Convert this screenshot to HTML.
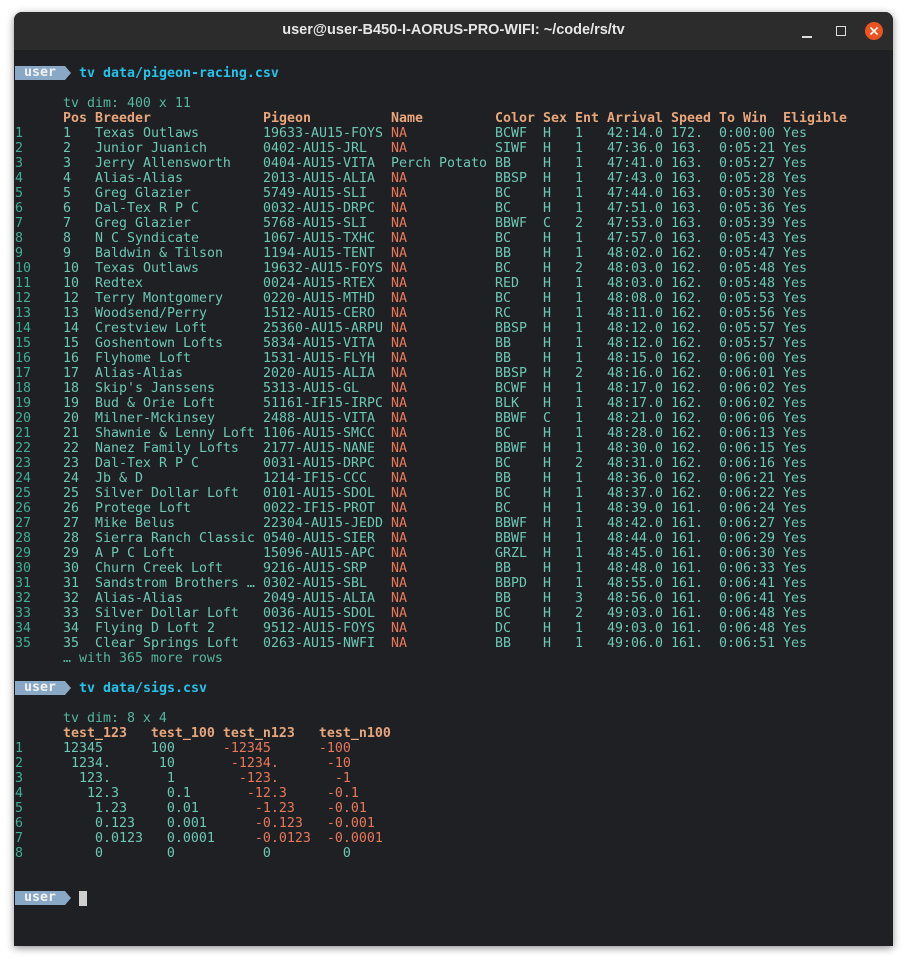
<!DOCTYPE html>
<html><head><meta charset="utf-8"><style>
html,body{margin:0;padding:0;background:#fff;width:911px;height:964px;overflow:hidden}
.win{position:absolute;left:14px;top:12px;width:879px;height:934px;background:#1f2023;border-radius:8px 8px 0 0;box-shadow:0 2px 8px rgba(0,0,0,.45);overflow:hidden}
.tb{position:absolute;left:0;top:0;width:879px;height:38px;background:#2c2c2c}
.title{position:absolute;left:0;right:0;top:10px;text-align:center;color:#e6e6e6;font:bold 14.5px "Liberation Sans",sans-serif}
.close{position:absolute;left:851px;top:10px;width:18px;height:18px;border-radius:50%;background:#e95420}
.max{position:absolute;left:822px;top:14px;width:8px;height:8px;border:1.2px solid #ddd}
.min{position:absolute;left:788px;top:24px;width:10px;height:1.5px;background:#ddd}
.term{position:absolute;left:1px;top:54px;font-family:"DejaVu Sans Mono","Liberation Mono",monospace;font-size:13.29px;line-height:15px;color:#6cc7b5;white-space:normal}
.l{height:15px;position:relative;white-space:pre}
.r{display:grid;grid-template-columns:48px 32px 168px 128px 104px 48px 32px 32px 64px 48px 64px auto;height:15px}
.r span{white-space:pre}
.n{color:#3fae98}
.h{color:#e8a67c;font-weight:bold}
.na{color:#e8775a}
.neg{color:#e8775a}
.d{color:#55b59f}
.badge{display:inline-block;position:absolute;left:0;top:0;width:50px;height:14px;background:#88a8c6;color:#f2f2f2;font-weight:bold}
.badge b{position:absolute;left:9px;top:-1px}
.badge:after{content:"";position:absolute;left:50px;top:0;border-left:6px solid #88a8c6;border-top:7px solid transparent;border-bottom:7px solid transparent}
.cmd{color:#26c2ea;font-weight:bold;position:absolute;left:64px;top:0}
.cur{position:absolute;left:64px;top:0;width:8px;height:15px;background:#cfcfcf}
</style></head><body>
<div class="win">
<div class="tb"><div class="title">user@user-B450-I-AORUS-PRO-WIFI: ~/code/rs/tv</div>
<div class="min"></div><div class="max"></div><div class="close"><svg width="18" height="18"><path d="M5.5 5.5L12.5 12.5M12.5 5.5L5.5 12.5" stroke="#fff" stroke-width="1.6"/></svg></div></div>
<div class="term">
<div class="l"><span class="badge"><b>user</b></span><span class="cmd">tv data/pigeon-racing.csv</span></div>
<div class="l"></div>
<div class="l d">      tv dim: 400 x 11</div>
<div class="r h"><span></span><span>Pos</span><span>Breeder</span><span>Pigeon</span><span>Name</span><span>Color</span><span>Sex</span><span>Ent</span><span>Arrival</span><span>Speed</span><span>To Win</span><span>Eligible</span></div>
<div class="r"><span class="n">1</span><span>1</span><span>Texas Outlaws</span><span>19633-AU15-FOYS</span><span class="na">NA</span><span>BCWF</span><span>H</span><span>1</span><span>42:14.0</span><span>172.</span><span>0:00:00</span><span>Yes</span></div>
<div class="r"><span class="n">2</span><span>2</span><span>Junior Juanich</span><span>0402-AU15-JRL</span><span class="na">NA</span><span>SIWF</span><span>H</span><span>1</span><span>47:36.0</span><span>163.</span><span>0:05:21</span><span>Yes</span></div>
<div class="r"><span class="n">3</span><span>3</span><span>Jerry Allensworth</span><span>0404-AU15-VITA</span><span>Perch Potato</span><span>BB</span><span>H</span><span>1</span><span>47:41.0</span><span>163.</span><span>0:05:27</span><span>Yes</span></div>
<div class="r"><span class="n">4</span><span>4</span><span>Alias-Alias</span><span>2013-AU15-ALIA</span><span class="na">NA</span><span>BBSP</span><span>H</span><span>1</span><span>47:43.0</span><span>163.</span><span>0:05:28</span><span>Yes</span></div>
<div class="r"><span class="n">5</span><span>5</span><span>Greg Glazier</span><span>5749-AU15-SLI</span><span class="na">NA</span><span>BC</span><span>H</span><span>1</span><span>47:44.0</span><span>163.</span><span>0:05:30</span><span>Yes</span></div>
<div class="r"><span class="n">6</span><span>6</span><span>Dal-Tex R P C</span><span>0032-AU15-DRPC</span><span class="na">NA</span><span>BC</span><span>H</span><span>1</span><span>47:51.0</span><span>163.</span><span>0:05:36</span><span>Yes</span></div>
<div class="r"><span class="n">7</span><span>7</span><span>Greg Glazier</span><span>5768-AU15-SLI</span><span class="na">NA</span><span>BBWF</span><span>C</span><span>2</span><span>47:53.0</span><span>163.</span><span>0:05:39</span><span>Yes</span></div>
<div class="r"><span class="n">8</span><span>8</span><span>N C Syndicate</span><span>1067-AU15-TXHC</span><span class="na">NA</span><span>BC</span><span>H</span><span>1</span><span>47:57.0</span><span>163.</span><span>0:05:43</span><span>Yes</span></div>
<div class="r"><span class="n">9</span><span>9</span><span>Baldwin &amp; Tilson</span><span>1194-AU15-TENT</span><span class="na">NA</span><span>BB</span><span>H</span><span>1</span><span>48:02.0</span><span>162.</span><span>0:05:47</span><span>Yes</span></div>
<div class="r"><span class="n">10</span><span>10</span><span>Texas Outlaws</span><span>19632-AU15-FOYS</span><span class="na">NA</span><span>BC</span><span>H</span><span>2</span><span>48:03.0</span><span>162.</span><span>0:05:48</span><span>Yes</span></div>
<div class="r"><span class="n">11</span><span>10</span><span>Redtex</span><span>0024-AU15-RTEX</span><span class="na">NA</span><span>RED</span><span>H</span><span>1</span><span>48:03.0</span><span>162.</span><span>0:05:48</span><span>Yes</span></div>
<div class="r"><span class="n">12</span><span>12</span><span>Terry Montgomery</span><span>0220-AU15-MTHD</span><span class="na">NA</span><span>BC</span><span>H</span><span>1</span><span>48:08.0</span><span>162.</span><span>0:05:53</span><span>Yes</span></div>
<div class="r"><span class="n">13</span><span>13</span><span>Woodsend/Perry</span><span>1512-AU15-CERO</span><span class="na">NA</span><span>RC</span><span>H</span><span>1</span><span>48:11.0</span><span>162.</span><span>0:05:56</span><span>Yes</span></div>
<div class="r"><span class="n">14</span><span>14</span><span>Crestview Loft</span><span>25360-AU15-ARPU</span><span class="na">NA</span><span>BBSP</span><span>H</span><span>1</span><span>48:12.0</span><span>162.</span><span>0:05:57</span><span>Yes</span></div>
<div class="r"><span class="n">15</span><span>15</span><span>Goshentown Lofts</span><span>5834-AU15-VITA</span><span class="na">NA</span><span>BB</span><span>H</span><span>1</span><span>48:12.0</span><span>162.</span><span>0:05:57</span><span>Yes</span></div>
<div class="r"><span class="n">16</span><span>16</span><span>Flyhome Loft</span><span>1531-AU15-FLYH</span><span class="na">NA</span><span>BB</span><span>H</span><span>1</span><span>48:15.0</span><span>162.</span><span>0:06:00</span><span>Yes</span></div>
<div class="r"><span class="n">17</span><span>17</span><span>Alias-Alias</span><span>2020-AU15-ALIA</span><span class="na">NA</span><span>BBSP</span><span>H</span><span>2</span><span>48:16.0</span><span>162.</span><span>0:06:01</span><span>Yes</span></div>
<div class="r"><span class="n">18</span><span>18</span><span>Skip's Janssens</span><span>5313-AU15-GL</span><span class="na">NA</span><span>BCWF</span><span>H</span><span>1</span><span>48:17.0</span><span>162.</span><span>0:06:02</span><span>Yes</span></div>
<div class="r"><span class="n">19</span><span>19</span><span>Bud &amp; Orie Loft</span><span>51161-IF15-IRPC</span><span class="na">NA</span><span>BLK</span><span>H</span><span>1</span><span>48:17.0</span><span>162.</span><span>0:06:02</span><span>Yes</span></div>
<div class="r"><span class="n">20</span><span>20</span><span>Milner-Mckinsey</span><span>2488-AU15-VITA</span><span class="na">NA</span><span>BBWF</span><span>C</span><span>1</span><span>48:21.0</span><span>162.</span><span>0:06:06</span><span>Yes</span></div>
<div class="r"><span class="n">21</span><span>21</span><span>Shawnie &amp; Lenny Loft</span><span>1106-AU15-SMCC</span><span class="na">NA</span><span>BC</span><span>H</span><span>1</span><span>48:28.0</span><span>162.</span><span>0:06:13</span><span>Yes</span></div>
<div class="r"><span class="n">22</span><span>22</span><span>Nanez Family Lofts</span><span>2177-AU15-NANE</span><span class="na">NA</span><span>BBWF</span><span>H</span><span>1</span><span>48:30.0</span><span>162.</span><span>0:06:15</span><span>Yes</span></div>
<div class="r"><span class="n">23</span><span>23</span><span>Dal-Tex R P C</span><span>0031-AU15-DRPC</span><span class="na">NA</span><span>BC</span><span>H</span><span>2</span><span>48:31.0</span><span>162.</span><span>0:06:16</span><span>Yes</span></div>
<div class="r"><span class="n">24</span><span>24</span><span>Jb &amp; D</span><span>1214-IF15-CCC</span><span class="na">NA</span><span>BB</span><span>H</span><span>1</span><span>48:36.0</span><span>162.</span><span>0:06:21</span><span>Yes</span></div>
<div class="r"><span class="n">25</span><span>25</span><span>Silver Dollar Loft</span><span>0101-AU15-SDOL</span><span class="na">NA</span><span>BC</span><span>H</span><span>1</span><span>48:37.0</span><span>162.</span><span>0:06:22</span><span>Yes</span></div>
<div class="r"><span class="n">26</span><span>26</span><span>Protege Loft</span><span>0022-IF15-PROT</span><span class="na">NA</span><span>BC</span><span>H</span><span>1</span><span>48:39.0</span><span>161.</span><span>0:06:24</span><span>Yes</span></div>
<div class="r"><span class="n">27</span><span>27</span><span>Mike Belus</span><span>22304-AU15-JEDD</span><span class="na">NA</span><span>BBWF</span><span>H</span><span>1</span><span>48:42.0</span><span>161.</span><span>0:06:27</span><span>Yes</span></div>
<div class="r"><span class="n">28</span><span>28</span><span>Sierra Ranch Classic</span><span>0540-AU15-SIER</span><span class="na">NA</span><span>BBWF</span><span>H</span><span>1</span><span>48:44.0</span><span>161.</span><span>0:06:29</span><span>Yes</span></div>
<div class="r"><span class="n">29</span><span>29</span><span>A P C Loft</span><span>15096-AU15-APC</span><span class="na">NA</span><span>GRZL</span><span>H</span><span>1</span><span>48:45.0</span><span>161.</span><span>0:06:30</span><span>Yes</span></div>
<div class="r"><span class="n">30</span><span>30</span><span>Churn Creek Loft</span><span>9216-AU15-SRP</span><span class="na">NA</span><span>BB</span><span>H</span><span>1</span><span>48:48.0</span><span>161.</span><span>0:06:33</span><span>Yes</span></div>
<div class="r"><span class="n">31</span><span>31</span><span>Sandstrom Brothers …</span><span>0302-AU15-SBL</span><span class="na">NA</span><span>BBPD</span><span>H</span><span>1</span><span>48:55.0</span><span>161.</span><span>0:06:41</span><span>Yes</span></div>
<div class="r"><span class="n">32</span><span>32</span><span>Alias-Alias</span><span>2049-AU15-ALIA</span><span class="na">NA</span><span>BB</span><span>H</span><span>3</span><span>48:56.0</span><span>161.</span><span>0:06:41</span><span>Yes</span></div>
<div class="r"><span class="n">33</span><span>33</span><span>Silver Dollar Loft</span><span>0036-AU15-SDOL</span><span class="na">NA</span><span>BC</span><span>H</span><span>2</span><span>49:03.0</span><span>161.</span><span>0:06:48</span><span>Yes</span></div>
<div class="r"><span class="n">34</span><span>34</span><span>Flying D Loft 2</span><span>9512-AU15-FOYS</span><span class="na">NA</span><span>DC</span><span>H</span><span>1</span><span>49:03.0</span><span>161.</span><span>0:06:48</span><span>Yes</span></div>
<div class="r"><span class="n">35</span><span>35</span><span>Clear Springs Loft</span><span>0263-AU15-NWFI</span><span class="na">NA</span><span>BB</span><span>H</span><span>1</span><span>49:06.0</span><span>161.</span><span>0:06:51</span><span>Yes</span></div>
<div class="l d">      … with 365 more rows</div>
<div class="l"></div>
<div class="l"><span class="badge"><b>user</b></span><span class="cmd">tv data/sigs.csv</span></div>
<div class="l"></div>
<div class="l d">      tv dim: 8 x 4</div>
<div class="l h">      test_123   test_100 test_n123   test_n100</div>
<div class="l"><span class="n">1</span>     12345      100      <span class="neg">-12345</span>      <span class="neg">-100</span></div>
<div class="l"><span class="n">2</span>      1234.      10       <span class="neg">-1234.</span>      <span class="neg">-10</span></div>
<div class="l"><span class="n">3</span>       123.       1        <span class="neg">-123.</span>       <span class="neg">-1</span></div>
<div class="l"><span class="n">4</span>        12.3      0.1       <span class="neg">-12.3</span>     <span class="neg">-0.1</span></div>
<div class="l"><span class="n">5</span>         1.23     0.01       <span class="neg">-1.23</span>    <span class="neg">-0.01</span></div>
<div class="l"><span class="n">6</span>         0.123    0.001      <span class="neg">-0.123</span>   <span class="neg">-0.001</span></div>
<div class="l"><span class="n">7</span>         0.0123   0.0001     <span class="neg">-0.0123</span>  <span class="neg">-0.0001</span></div>
<div class="l"><span class="n">8</span>         0        0           0         0</div>
<div class="l"></div>
<div class="l"></div>
<div class="l"><span class="badge"><b>user</b></span><span class="cur"></span></div>
</div>
</div>
</body></html>
